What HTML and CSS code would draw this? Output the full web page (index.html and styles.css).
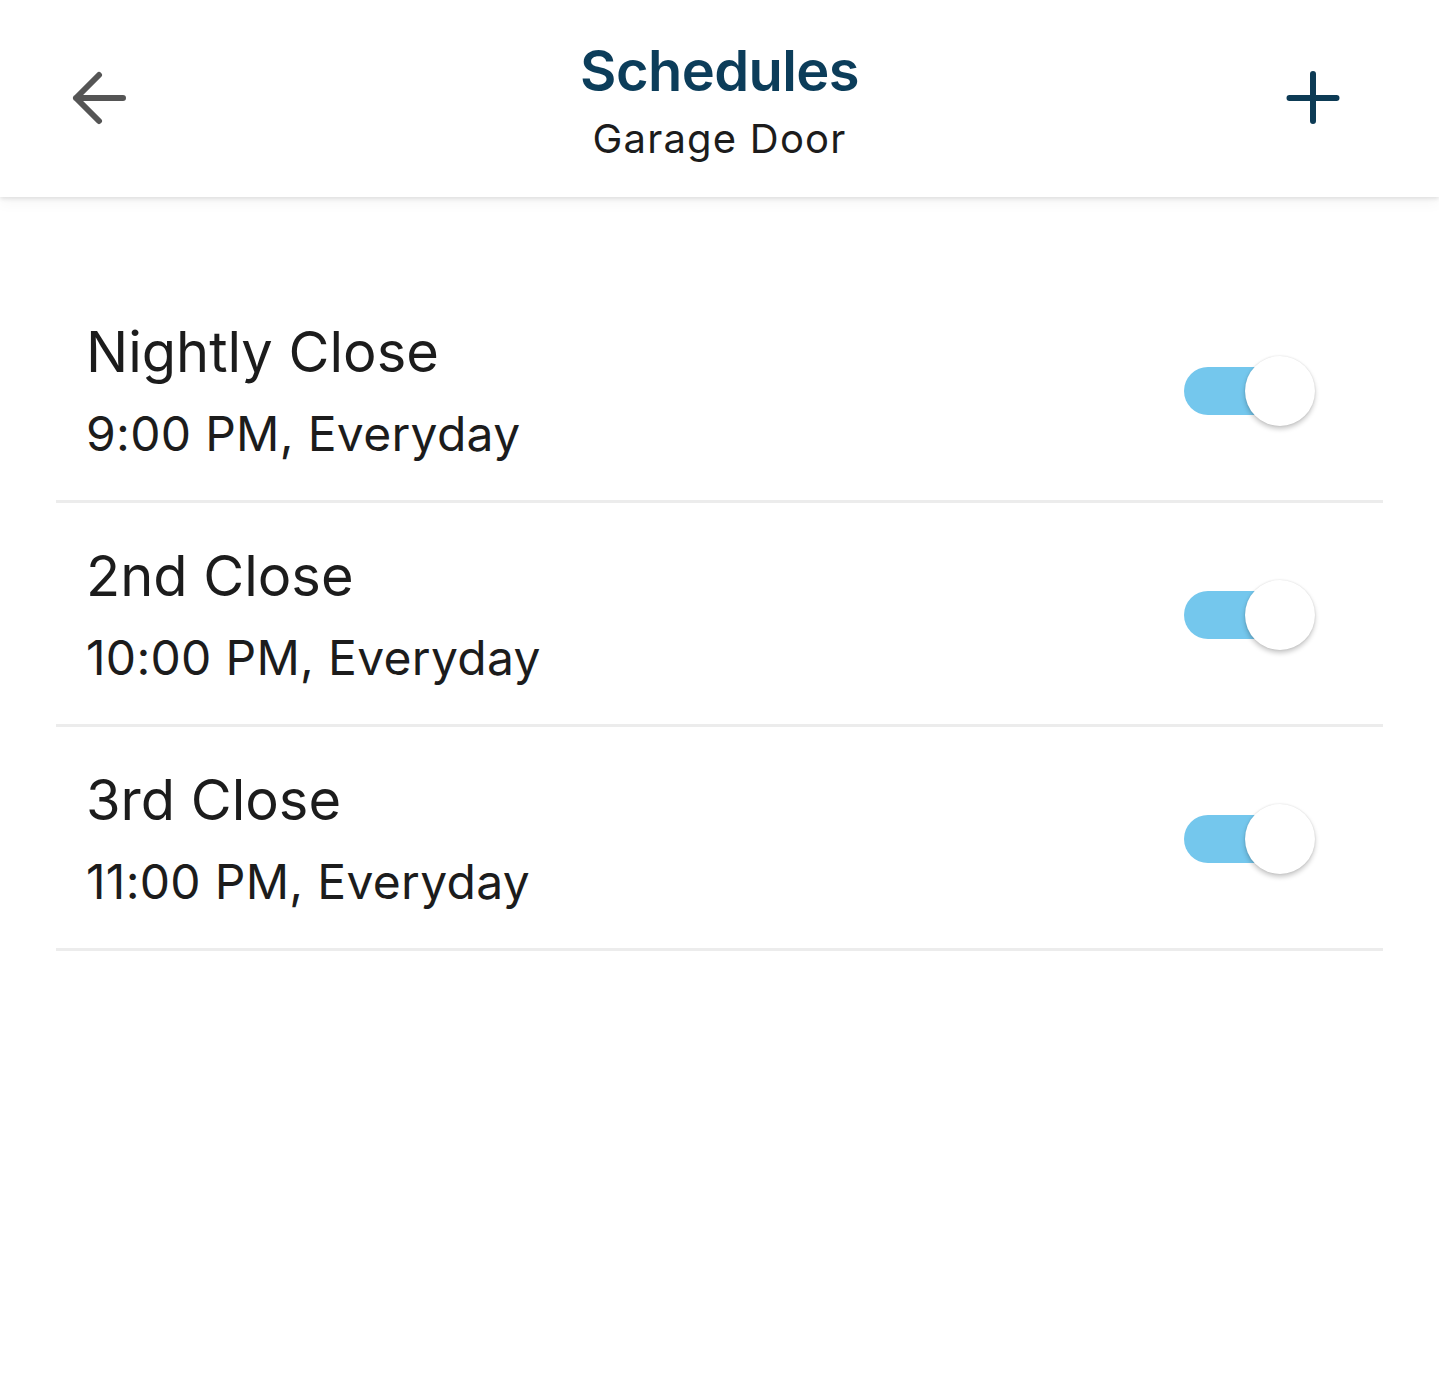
FILE: index.html
```html
<!DOCTYPE html>
<html>
<head>
<meta charset="utf-8">
<link rel="stylesheet" href="styles.css">
</head>
<body>
<header class="topbar">
  <button class="icon-btn back" aria-label="Back">
    <svg width="60" height="60" viewBox="0 0 60 60"><path d="M27 7 L4 30 L27 53 M4 30 L51 30" fill="none" stroke="#555" stroke-width="6" stroke-linecap="round" stroke-linejoin="round"/></svg>
  </button>
  <div class="titles">
    <div class="title">Schedules</div>
    <div class="subtitle">Garage Door</div>
  </div>
  <button class="icon-btn add" aria-label="Add">
    <svg width="60" height="60" viewBox="0 0 60 60"><path d="M30 6 L30 53 M6.5 30 L53.5 30" fill="none" stroke="#0d3b55" stroke-width="6" stroke-linecap="round"/></svg>
  </button>
</header>
<main class="list">
  <div class="row">
    <div class="text">
      <div class="name">Nightly Close</div>
      <div class="time">9:00 PM, Everyday</div>
    </div>
    <div class="toggle"><span class="track"></span><span class="thumb"></span></div>
  </div>
  <div class="row">
    <div class="text">
      <div class="name">2nd Close</div>
      <div class="time">10:00 PM, Everyday</div>
    </div>
    <div class="toggle"><span class="track"></span><span class="thumb"></span></div>
  </div>
  <div class="row">
    <div class="text">
      <div class="name">3rd Close</div>
      <div class="time">11:00 PM, Everyday</div>
    </div>
    <div class="toggle"><span class="track"></span><span class="thumb"></span></div>
  </div>
</main>
</body>
</html>
```
FILE: styles.css
```css
* { box-sizing: border-box; }
html, body { margin: 0; padding: 0; background: #fff; }
body { font-family: Inter, "Noto Sans", sans-serif; color: #1c1c1c; }

.topbar {
  height: 197px;
  display: grid;
  grid-template-columns: 1fr auto 1fr;
  align-items: center;
  padding: 0 72px;
  background: #fff;
  box-shadow: 0 2px 4px rgba(0,0,0,0.10), 0 6px 14px rgba(0,0,0,0.04);
  position: relative;
  z-index: 1;
}
.icon-btn {
  width: 60px; height: 60px;
  border: 0; padding: 0; background: none;
  display: flex; align-items: center; justify-content: center;
}
.icon-btn svg { display: block; }
.back { margin-top: -2px; justify-self: start; }
.add { margin-top: -2px; margin-right: 24px; justify-self: end; }
.titles {
  display: flex; flex-direction: column; align-items: center;
  margin-top: 2px;
}
.title {
  font-size: 56px;
  font-weight: 600;
  color: #0c3d5a;
  line-height: 68px;
  letter-spacing: -0.6px;
}
.subtitle {
  font-size: 40px;
  font-weight: 400;
  color: #1c1c1c;
  line-height: 48px;
  margin-top: 10px;
  letter-spacing: 1.2px;
}

.list {
  padding: 82px 56px 0 56px;
}
.row {
  display: flex;
  align-items: center;
  justify-content: space-between;
  padding: 39px 67px 37px 30px;
  border-bottom: 3px solid #ececec;
}
.name {
  font-size: 56px;
  line-height: 68px;
  color: #1c1c1c;
  letter-spacing: 0;
}
.time {
  font-size: 48px;
  line-height: 58px;
  margin-top: 19px;
  color: #1c1c1c;
  letter-spacing: 0.3px;
}
.toggle {
  position: relative;
  width: 133px;
  height: 72px;
}
.track {
  position: absolute;
  left: 1px; top: 12px;
  width: 110px; height: 48px;
  border-radius: 24px;
  background: #74c7ed;
}
.thumb {
  position: absolute;
  left: 62px; top: 1px;
  width: 70px; height: 70px;
  border-radius: 50%;
  background: #fff;
  box-shadow: 0 3px 5px rgba(0,0,0,0.22), 0 0 2px rgba(0,0,0,0.12);
}
```
